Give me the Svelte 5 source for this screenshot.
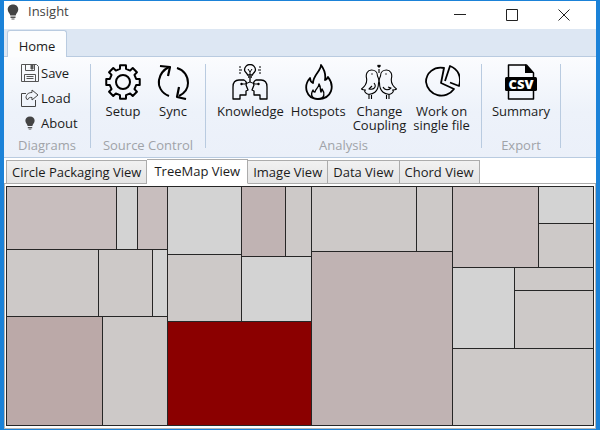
<script>
  let activeView = $state('TreeMap View');
  const views = ['Circle Packaging View', 'TreeMap View', 'Image View', 'Data View', 'Chord View'];

  const groups = [
    { name: 'Source Control', width: 115, tools: [['Setup', 'gear'], ['Sync', 'sync']] },
    {
      name: 'Analysis',
      width: 276,
      tools: [
        ['Knowledge', 'heads'],
        ['Hotspots', 'flame'],
        ['Change\nCoupling', 'birds'],
        ['Work on\nsingle file', 'pie']
      ]
    },
    { name: 'Export', width: 79, tools: [['Summary', 'csv']] }
  ];

  const leaf = (size, color) => ({ size, color });
  const row = (size, ...children) => ({ size, dir: 'row', children });
  const col = (size, ...children) => ({ size, dir: 'column', children });

  const C0 = '#d3d3d3', C1 = '#cdc9c8', C2 = '#c8bebe', C3 = '#c0b3b3', C4 = '#bba9a8', HOT = '#8b0000';

  const tree = row(1,
    col(160,
      row(62, leaf(109, C2), leaf(20, C0), leaf(29, C2)),
      row(66, leaf(91, C1), leaf(53, C1), leaf(14, C0)),
      row(108, leaf(95, C4), leaf(64, C1))
    ),
    col(143,
      row(134,
        col(73, leaf(67, C0), leaf(66, C1)),
        col(69, row(69, leaf(43, C3), leaf(25, C1)), leaf(64, C0))
      ),
      leaf(103, HOT)
    ),
    col(140, row(64, leaf(104, C1), leaf(35, C1)), leaf(173, C3)),
    col(140,
      row(80, leaf(85, C2), col(54, leaf(36, C0), leaf(43, C1))),
      row(80, leaf(61, C0), col(78, leaf(22, C1), leaf(57, C1))),
      leaf(76, C1)
    )
  );

  const gearPath = (() => {
    const pts = [];
    for (let i = 0; i < 8; i++) {
      for (const [off, r] of [[-13, 13.5], [-10, 17], [10, 17], [13, 13.5]]) {
        const a = ((i * 45 + off) * Math.PI) / 180;
        pts.push(`${(18 + r * Math.sin(a)).toFixed(2)} ${(18 - r * Math.cos(a)).toFixed(2)}`);
      }
    }
    return 'M' + pts.join('L') + 'Z';
  })();
</script>

{#snippet bulb()}
  <svg class="bulb" viewBox="0 0 12 16" aria-hidden="true">
    <path d="M6 0.500C2.700.5.7 2.700.7 5.400c0 2.600 2.300 3.700 2.600 6.100h5.400c.3-2.400 2.600-3.500 2.600-6.100C11.300 2.700 9.300.5 6 .5Z" fill="#444" />
    <path d="M3.500 12.500h5v1.500h-5zM4.500 14.500h3v1h-3z" fill="#555" />
  </svg>
{/snippet}

{#snippet icon(kind)}
  <svg class="icon" viewBox="0 0 36 36" fill="none" stroke="#000" stroke-width="1.800" stroke-linejoin="round" aria-hidden="true">
    {#if kind === 'gear'}
      <path d={gearPath} stroke-width="2" />
      <circle cx="18" cy="18" r="7" stroke-width="2" />
    {:else if kind === 'sync'}
      <path d="M14 32C6 29 3 22 4 16 5 10 8 6 14 3M22 4c7 2 11 8 11 15 0 6-3 10-9 13" stroke-width="2" />
      <path d="M5 2l10 1-2 9M24 23l-2 10 9 2" stroke-width="2.200" />
    {:else if kind === 'heads'}
      <g stroke-width="1.300">
        <path d="M15.500 11c0-2-3-2.500-3-5a5.500 5.500 0 0 1 11 0c0 2.500-3 3-3 5zM16 13h4M18 14v4" />
        <path d="M16 5l2 3 2-3M18 8v3M7 6h3M26 6h3" stroke-width="1" />
        <path d="M8 2v2M8 8v2M28 2v2M28 8v2" stroke-width="1" />
        <path d="M1 35V23c0-5 2-7 6-7h5c2 1 3 3 2 5l2 5-2 1v4H8v4zM35 35V23c0-5-2-7-6-7h-5c-2 1-3 3-2 5l-2 5 2 1v4h6v4z" />
        <path d="M18 18l-5 2H9M18 18l5 2h4" stroke-width="1" />
        <circle cx="9.500" cy="20" r="1.200" fill="#000" stroke="none" /><circle cx="26.500" cy="20" r="1.200" fill="#000" stroke="none" />
      </g>
    {:else if kind === 'flame'}
      <path d="M18 1c0 7-8 11-7 19-3-1-4-3-4-6-7 8-4 21 9 21 16 0 17-15 9-23-1 2-2 3-3 3 1-6-1-10-4-14Z" transform="translate(2)" stroke-width="0" />
      <path d="M21 1C21 7 13 11 13 19c-2-1-3-2-3-5-7 8-4 21 8 21 14 0 17-13 10-22-1 2-2 3-3 3 1-6-1-11-4-15Z" />
      <path d="M19 20c0 4-4 5-4 8-1 0-2-1-2-2-3 5-1 9 5 9 7 0 7-6 4-10l-1 3c-1-2 0-5-2-8Z" stroke-width="1.400" />
    {:else if kind === 'birds'}
      <g stroke-width="1.100">
        <path d="M17.500 19c1-3 0-5-1-7 0-4-3-6-6-6-4 0-6 4-5 8 1 5-1 8-5 11 1 1 3 1 4 1-2 1 0 3 2 4 5 1 11-2 11-11ZM18.500 19c-1-3 0-5 1-7 0-4 3-6 6-6 4 0 6 4 5 8-1 5 1 8 5 11-1 1-3 1-4 1 2 1 0 3-2 4-5 1-11-2-11-11Z" />
        <path d="M13 19c3 4 0 7-5 6l3-3M22 23c2 4 6 3 8 1l-3-1M8 30v5M10.500 31v4M25.500 31v4M28 30v5M18 5v4" />
        <circle cx="11" cy="10" r=".7" fill="#000" stroke="none" /><circle cx="25" cy="10" r=".7" fill="#000" stroke="none" />
        <path d="M18 4l-2-2 1-1.500 1 .7 1-.7 1 1.500z" fill="#000" stroke="none" />
      </g>
    {:else if kind === 'pie'}
      <path d="M20 4C10 2 2 9 2 18a15.500 15.500 0 0 0 28 7L17 19Z" />
      <path d="M21 17l5-15c8 3 12 11 9 20l-9-3.500" />
    {:else}
      <path d="M5.500 1h18l7 8v26h-25z" stroke-width="1.500" />
      <path d="M22 0l9 9h-9z" fill="#000" stroke="none" />
      <rect x="2" y="13" width="32" height="14" rx="1.500" fill="#000" stroke="none" />
      <text x="18" y="24.500" text-anchor="middle" class="csv">CSV</text>
    {/if}
  </svg>
{/snippet}

{#snippet node(n)}
  {#if n.children}
    <div class="branch" style="flex-grow: {n.size}; flex-direction: {n.dir}">
      {#each n.children as child}{@render node(child)}{/each}
    </div>
  {:else}
    <div class="leaf" style="flex-grow: {n.size}; background: {n.color}"></div>
  {/if}
{/snippet}

<div class="window">
  <header class="titlebar">
    {@render bulb()}
    <span class="title">Insight</span>
    <button class="sys" aria-label="Minimize"><svg viewBox="0 0 12 12"><path d="M0 5.500h12" /></svg></button>
    <button class="sys" aria-label="Maximize"><svg viewBox="0 0 12 12"><path d="M.5.5h11v11H.5z" /></svg></button>
    <button class="sys" aria-label="Close"><svg viewBox="0 0 12 12"><path d="M.5.5l11 11M11.500.5l-11 11" /></svg></button>
  </header>

  <nav class="strip"><button class="home">Home</button></nav>

  <section class="ribbon">
    <div class="group" style="width: 87px">
      <div class="small-tools">
        <button class="small">
          <svg class="mini" viewBox="0 0 18 18" fill="none" stroke="#555" aria-hidden="true">
            <path d="M.5.5h15l2 2v15H.5zM4.500.5v6h9v-6M3.500 17.500v-7h11v7M5.500 12.500h7M5.500 14.500h7" /><path d="M10 1h2v4h-2z" fill="#555" />
          </svg>Save
        </button>
        <button class="small">
          <svg class="mini" viewBox="0 0 18 18" fill="none" stroke="#444" aria-hidden="true">
            <path d="M5 4.500H.5v13h14V11" /><path d="M5 9c0-4 3-5.500 6-5.500V1l6 5-6 5V8.500C9 8 7 9 6.500 11Z" />
          </svg>Load
        </button>
        <button class="small"><span class="mini">{@render bulb()}</span>About</button>
      </div>
      <div class="caption">Diagrams</div>
    </div>
    {#each groups as g}
      <div class="group" style="width: {g.width}px">
        <div class="tools">
          {#each g.tools as [label, kind]}
            <button class="tool">{@render icon(kind)}<span>{label}</span></button>
          {/each}
        </div>
        <div class="caption">{g.name}</div>
      </div>
    {/each}
  </section>

  <div class="views" role="tablist">
    {#each views as v}
      <button role="tab" class="view" class:active={v === activeView} aria-selected={v === activeView} onclick={() => (activeView = v)}>{v}</button>
    {/each}
  </div>

  <main class="panel">
    <div class="treemap">{@render node(tree)}</div>
  </main>
</div>

<style>
  :global(body) { margin: 0; }
  .window {
    box-sizing: border-box;
    min-height: 100vh;
    display: flex;
    flex-direction: column;
    border: solid #1b82d8;
    border-width: 1px 4px;
    background: #fff;
    font: 13px/15px "Open Sans", "Noto Sans", sans-serif;
    color: #1b1b1b;
  }
  button {
    font: inherit;
    color: inherit;
    background: none;
    border: 0;
    padding: 0;
    margin: 0;
  }
  svg { display: block; }
  .titlebar { display: flex; height: 28px; padding: 0 6px 0 3px; }
  .bulb { width: 12px; height: 16px; }
  .titlebar .bulb { margin-top: 3px; }
  .title { flex: 1; margin: 3px 0 0 9px; color: #444; }
  .sys { width: 52px; display: flex; justify-content: center; align-items: center; }
  .sys svg { width: 12px; height: 12px; fill: none; stroke: #222; }

  .strip {
    box-sizing: border-box;
    display: flex;
    height: 28px;
    padding: 1px 3px 0;
    background: #dde7f3;
    box-shadow: inset 0 -1px #b9cbe0;
  }
  .home {
    width: 60px;
    border: 1px solid #b9cbe0;
    border-bottom: 0;
    border-radius: 3px 3px 0 0;
    background: #fcfdfe;
    padding-top: 4px;
  }

  .ribbon {
    display: flex;
    height: 100px;
    background: linear-gradient(#fbfcfe, #edf2fa 55%, #ebf0f9);
    border-bottom: 1px solid #b9cbe0;
  }
  .group {
    box-sizing: border-box;
    display: flex;
    flex-direction: column;
    align-items: center;
    margin: 7px 0 9px;
    border-right: 1px solid #b9cbe0;
  }
  .caption { margin: auto 0 -5px; color: #a0a3a8; white-space: nowrap; }
  .small-tools { display: flex; flex-direction: column; gap: 7px; align-self: stretch; padding-left: 17px; }
  .small { display: flex; align-items: center; gap: 2px; height: 18px; }
  .mini { width: 18px; height: 18px; display: flex; justify-content: center; align-items: center; }
  .mini .bulb { height: 14px; }
  .tools { display: flex; gap: 7px; }
  .tool { display: flex; flex-direction: column; align-items: center; min-width: 43px; }
  .tool span { white-space: pre; line-height: 14px; margin-top: 4px; }
  .icon { width: 36px; height: 36px; }
  .csv { font: 800 13px "Open Sans", sans-serif; fill: #fff; stroke: none; }

  .views {
    display: flex;
    align-items: flex-end;
    height: 26px;
    padding-left: 2px;
    box-shadow: inset 0 -1px #acacac;
  }
  .view {
    height: 24px;
    padding: 0 5px;
    border: 1px solid #acacac;
    border-left-width: 0;
    background: linear-gradient(#f1f1f1, #e5e5e5);
    white-space: nowrap;
  }
  .view:first-child { border-left-width: 1px; }
  .view.active { height: 25px; padding: 0 7px 1px; background: #fff; border-bottom-color: #fff; }

  .panel {
    flex: 1;
    display: flex;
    padding: 2px 1px;
    border: 1px solid #b4b4b4;
    border-top: 0;
  }
  .treemap { flex: 1; display: flex; padding: 1px; background: #262626; }
  .branch, .leaf { flex-basis: 0; min-width: 0; min-height: 0; }
  .branch { display: flex; gap: 1px; }
</style>
